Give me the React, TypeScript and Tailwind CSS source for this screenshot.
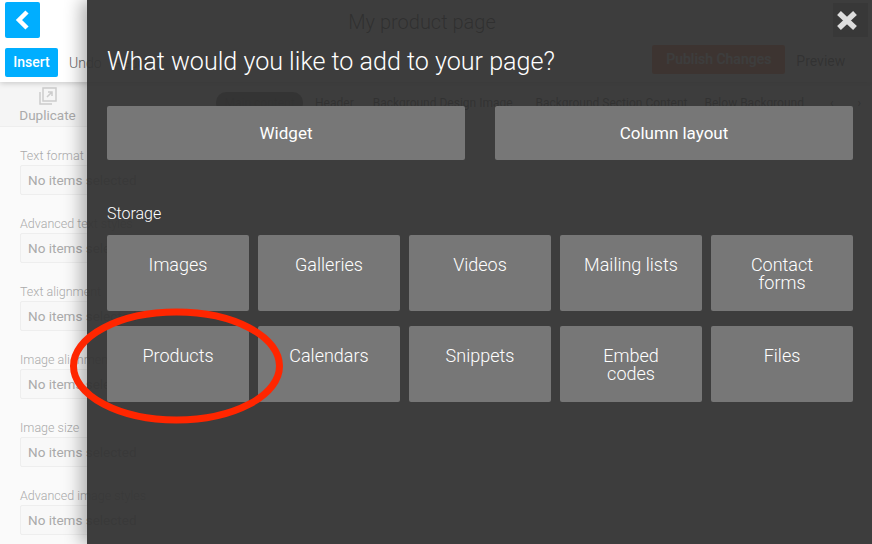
const fields = [
  "Text format",
  "Advanced text styles",
  "Text alignment",
  "Image alignment",
  "Image size",
  "Advanced image styles",
];

const row1 = ["Images", "Galleries", "Videos", "Mailing lists", "Contact forms"];
const row2 = ["Products", "Calendars", "Snippets", "Embed codes", "Files"];

function StorageTile({ label }: { label: string }) {
  return (
    <button className="flex h-[76px] items-start justify-center rounded-[2px] bg-[#777777] px-6 pt-[21px] text-center text-[18px] leading-[18px] font-light text-white">
      {label}
    </button>
  );
}

export default function App() {
  return (
    <div className="relative h-[544px] w-[872px] overflow-hidden bg-[#fafafa] font-['Roboto',sans-serif]">
      {/* page behind the panel */}
      <div className="relative flex h-[82px] flex-col bg-white pt-[2px] pl-[5px] shadow-[0_1px_6px_rgba(0,0,0,0.2)]">
        <div className="flex h-[43px] items-start">
          <div className="flex h-[36px] w-[35px] items-center justify-center rounded-[2px] bg-[#00aeff]">
            <svg width="16" height="20" viewBox="0 0 16 20">
              <path d="M12 2 L4 10 L12 18" fill="none" stroke="white" strokeWidth="4.5" />
            </svg>
          </div>
          <div className="mt-[3px] ml-[299px] flex h-[34px] w-[166px] items-center justify-center text-[20px] font-light text-black">
            My product page
          </div>
        </div>
        <div className="flex items-start">
          <button className="mt-[3px] h-[29px] w-[53px] rounded-[2px] bg-[#00aeff] text-[14px] font-medium text-white">
            Insert
          </button>
          <span className="mt-[8px] ml-[11px] text-[14px] font-light text-[#666]">Undo</span>
          <span className="mt-[8px] ml-[12px] text-[14px] font-light text-[#666]">Redo</span>
          <button className="ml-[507px] h-[29px] w-[133px] rounded-[2px] bg-[#ff5a1f] text-[14px] font-medium text-white">
            Publish Changes
          </button>
          <span className="mt-[6px] ml-[11px] text-[14px] text-[#333]">Preview</span>
        </div>
      </div>

      <div className="flex h-[45px] items-start border-b border-[#eeeeee] bg-[#f5f5f5] text-[13.5px] text-[#aaaaaa]">
        <div className="mt-[4px] ml-[20px] flex w-[55px] flex-col items-center">
          <svg width="20" height="20" viewBox="0 0 20 20" fill="none" stroke="#cccccc" strokeWidth="1.5">
            <path d="M5 2h13v13H5zM2 6v12h12" />
            <path d="M9 11l5-5M10 6h4v4" />
          </svg>
          <span className="mt-[1px] leading-[16px]">Duplicate</span>
        </div>
        <span className="mt-[25px] ml-[49px] leading-[16px] text-[#222]">Delete</span>
        <div className="mt-[10px] ml-[54px] flex items-center text-[12px] text-[#333]">
          <span className="h-[22px] w-[87px] rounded-[10px] bg-[#555] text-center leading-[22px]">Main content</span>
          <span className="ml-[12px] whitespace-nowrap">Header</span>
          <span className="ml-[19px] whitespace-nowrap">Background Design Image</span>
          <span className="ml-[23px] whitespace-nowrap">Background Section Content</span>
          <span className="ml-[17px] whitespace-nowrap">Below Background</span>
          <span className="ml-[26px]">‹</span>
          <span className="ml-[24px]">›</span>
        </div>
      </div>

      <div className="flex flex-col gap-[22px] pt-[22px] pl-[20px]">
        {fields.map((f) => (
          <div key={f} className="flex flex-col">
            <span className="text-[12.5px] leading-[14px] font-light text-[#aaaaaa]">{f}</span>
            <div className="mt-[2px] flex h-[30px] w-[148px] items-center rounded-[2px] border border-[#eeeeee] bg-[#f8f8f8] pl-[7px] text-[13.5px] whitespace-nowrap text-[#aaaaaa]">
              No items selected
            </div>
          </div>
        ))}
      </div>

      {/* insert panel */}
      <div className="absolute top-0 right-0 bottom-0 left-[87px] bg-[#333333]/95 pr-[19px] pl-[20px] shadow-[-6px_0_16px_rgba(0,0,0,0.3)]">
        <h1 className="pt-[45px] text-[25.1px] leading-[34px] font-light text-white">
          What would you like to add to your page?
        </h1>
        <div className="mt-[27px] grid grid-cols-2 gap-[30px]">
          <button className="h-[54px] rounded-[2px] bg-[#777777] pt-[1px] text-[17px] text-white">Widget</button>
          <button className="h-[54px] rounded-[2px] bg-[#777777] pt-[1px] text-[17px] text-white">Column layout</button>
        </div>
        <div className="mt-[44px] text-[16px] leading-[20px] font-light text-white">Storage</div>
        <div className="mt-[11px] grid grid-cols-5 gap-x-[9px] gap-y-[15px]">
          {row1.map((t) => (
            <StorageTile key={t} label={t} />
          ))}
          {row2.map((t) => (
            <StorageTile key={t} label={t} />
          ))}
        </div>
        <div className="absolute top-[3px] right-[4px] flex h-[34px] w-[35px] items-center justify-center bg-[#383838]">
          <svg width="22" height="21" viewBox="0 0 22 21" className="-ml-[7px]">
            <path d="M3 3 L19 18 M19 3 L3 18" stroke="#dddddd" strokeWidth="5.5" />
          </svg>
        </div>
      </div>

      {/* annotation circled over the screenshot */}
      <svg className="absolute top-[305px] left-[68px]" width="220" height="122" viewBox="0 0 220 122">
        <ellipse cx="108.5" cy="61" rx="103" ry="54" fill="none" stroke="#ff2600" strokeWidth="7" />
      </svg>
    </div>
  );
}
